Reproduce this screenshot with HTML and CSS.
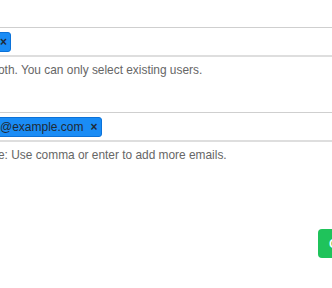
FILE: index.html
```html
<!DOCTYPE html>
<html lang="en">
<head>
    <meta charset="UTF-8">
    <meta name="viewport" content="width=device-width, initial-scale=1.0">
    <title>Share</title>
    <link rel="stylesheet" href="styles.css">
</head>
<body>
    <form class="share-form">
        <div class="field">
            <div class="tags-input">
                <span class="tag"><span class="tag-remove tag-remove-only">&times;</span></span>
            </div>
            <p class="help">oth. You can only select existing users.</p>
        </div>

        <div class="field field-emails">
            <div class="tags-input">
                <span class="tag">@example.com<span class="tag-remove">&times;</span></span>
            </div>
            <p class="help">e: Use comma or enter to add more emails.</p>
        </div>

        <div class="actions">
            <button type="submit" class="btn-create">Create</button>
        </div>
    </form>
</body>
</html>
```

FILE: styles.css
```css
body {
    margin: 0;
    background: #fff;
    font-family: "Liberation Sans", Arial, sans-serif;
    overflow: hidden;
}
.share-form {
    width: 420px;
    margin-left: -10px;
    padding-top: 27px;
}
.tags-input {
    box-sizing: border-box;
    height: 30px;
    display: flex;
    align-items: center;
    padding: 0 4px;
    border: 1px solid #cfcfcf;
    border-bottom: 2px solid #dedede;
    background: #fff;
}
.tag {
    box-sizing: border-box;
    height: 20px;
    display: inline-flex;
    align-items: center;
    padding: 0 3px 0 4px;
    background: #1a8cf5;
    border: 1px solid #0b72d9;
    border-radius: 3px;
    color: #1f2a36;
    font-size: 12px;
}
.tag-remove {
    margin-left: 7px;
    font-size: 12px;
    font-weight: bold;
    color: #1f2a36;
}
.tag-remove-only {
    margin-left: 0;
}
.help {
    margin: 5px 0 0;
    padding-left: 8px;
    font-size: 11.9px;
    line-height: 16px;
    color: #666;
}
.field-emails {
    margin-top: 34px;
}
.actions {
    margin-top: 66px;
    padding-left: 328px;
}
.btn-create {
    height: 29px;
    padding: 0 11px;
    border: none;
    border-radius: 4px;
    background: #1fc35b;
    color: #fff;
    font-family: "Liberation Sans", Arial, sans-serif;
    font-size: 12px;
    font-weight: bold;
}
```
